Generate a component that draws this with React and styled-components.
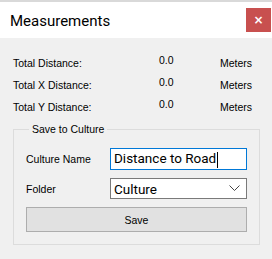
import React from "react";
import styled, { createGlobalStyle } from "styled-components";

const Global = createGlobalStyle`
  html, body { margin: 0; padding: 0; background: #f0f0f0; }
  body { width: 272px; height: 259px; overflow: hidden; font-family: "Liberation Sans", Arial, sans-serif; }
`;

const Window = styled.div`
  width: 272px;
  height: 259px;
  background: #f0f0f0;
  border-top: 2px solid #d9d9d9;
  box-sizing: border-box;
  display: flex;
  flex-direction: column;
`;

const TitleBar = styled.div`
  height: 36px;
  background: #ffffff;
  display: flex;
  align-items: center;
  justify-content: space-between;
  padding-left: 10px;
  padding-right: 1px;
`;

const Title = styled.div`
  font-family: "Roboto", "Noto Sans", sans-serif;
  font-size: 15px;
  color: #000;
  margin-top: 1px;
`;

const CloseButton = styled.div`
  width: 25px;
  height: 24px;
  background: #c8504f;
  color: #fff;
  display: flex;
  align-items: center;
  justify-content: center;
  font-family: "DejaVu Sans", sans-serif;
  font-size: 12px;
  font-weight: bold;
`;

const Body = styled.div`
  padding: 14px 13px 0 13px;
  display: flex;
  flex-direction: column;
`;

const Row = styled.div`
  display: grid;
  grid-template-columns: 146px 61px 1fr;
  height: 22px;
  align-items: center;
  font-size: 10.5px;
  color: #000;
`;

const Value = styled.span`
  position: relative;
  top: -3px;
`;

const Group = styled.fieldset`
  margin: 5px 0 0 0;
  width: 247px;
  box-sizing: border-box;
  border: 1px solid #dcdcdc;
  padding: 7px 12px 12px 12px;
  display: flex;
  flex-direction: column;
`;

const Legend = styled.legend`
  font-size: 10.5px;
  padding: 0 3px;
  margin-left: 3px;
  color: #000;
`;

const FieldRow = styled.div`
  display: flex;
  align-items: center;
  margin-top: ${(p) => p.gap}px;
`;

const Label = styled.label`
  width: 84px;
  font-size: 10.5px;
  color: #000;
`;

const Input = styled.div`
  width: 137px;
  height: ${(p) => p.h}px;
  box-sizing: border-box;
  border: 1px solid ${(p) => (p.focus ? "#0078d7" : "#7a7a7a")};
  background: #fff;
  display: flex;
  align-items: center;
  justify-content: space-between;
  padding: 0 6px 0 3px;
  font-family: "Roboto", "Noto Sans", sans-serif;
  font-size: 13.5px;
  color: #000;
`;

const Caret = styled.span`
  display: inline-block;
  width: 1px;
  height: 16px;
  background: #000;
  margin-left: 1px;
  vertical-align: middle;
`;

const SaveButton = styled.div`
  margin-top: 8px;
  height: 25px;
  box-sizing: border-box;
  border: 1px solid #adadad;
  background: #e1e1e1;
  display: flex;
  align-items: center;
  justify-content: center;
  font-size: 10.5px;
  color: #000;
`;

const rows = [
  ["Total Distance:", "0.0", "Meters"],
  ["Total X Distance:", "0.0", "Meters"],
  ["Total Y Distance:", "0.0", "Meters"],
];

export default function App() {
  return (
    <Window>
      <Global />
      <TitleBar>
        <Title>Measurements</Title>
        <CloseButton>×</CloseButton>
      </TitleBar>
      <Body>
        {rows.map(([l, v, u]) => (
          <Row key={l}>
            <span>{l}</span>
            <Value>{v}</Value>
            <span>{u}</span>
          </Row>
        ))}
        <Group>
          <Legend>Save to Culture</Legend>
          <FieldRow gap={6}>
            <Label>Culture Name</Label>
            <Input focus h={22}>
              <span>
                Distance to Road<Caret />
              </span>
            </Input>
          </FieldRow>
          <FieldRow gap={8}>
            <Label>Folder</Label>
            <Input h={21}>
              <span>Culture</span>
              <svg width="11" height="7" viewBox="0 0 11 7">
                <path d="M0.5 0.5 L5.5 5.5 L10.5 0.5" fill="none" stroke="#444" strokeWidth="1" />
              </svg>
            </Input>
          </FieldRow>
          <SaveButton>Save</SaveButton>
        </Group>
      </Body>
    </Window>
  );
}
